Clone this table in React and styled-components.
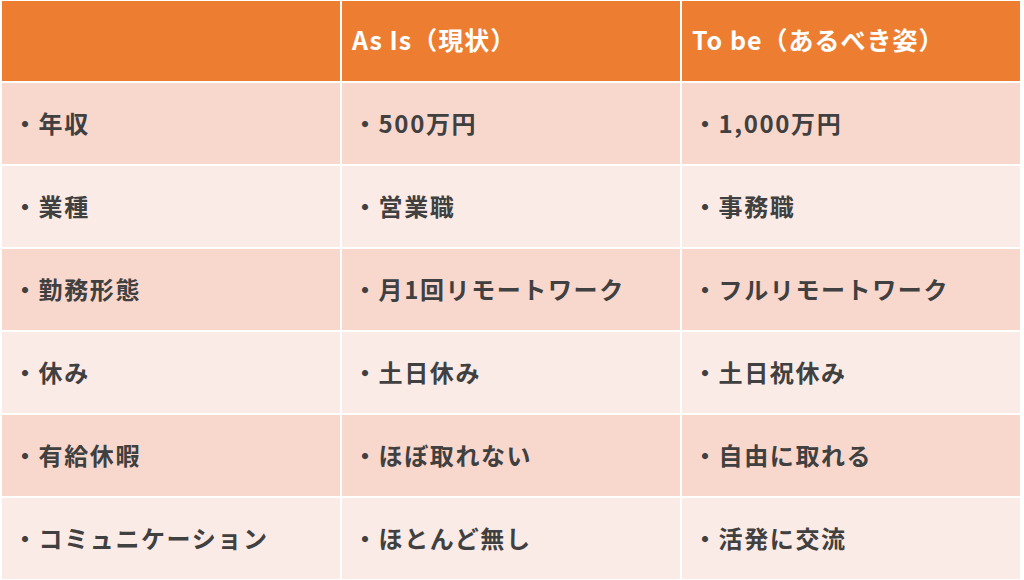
import React from 'react';
import styled, { createGlobalStyle } from 'styled-components';

const GlobalStyle = createGlobalStyle`
  html, body {
    margin: 0;
    padding: 0;
    background: #ffffff;
  }
`;

const Table = styled.div`
  display: grid;
  grid-template-columns: repeat(3, 338px);
  grid-template-rows: 80px repeat(6, 81px);
  column-gap: 2px;
  row-gap: 2px;
  padding: 1px 0 0 2px;
  background: #ffffff;
  font-family: 'Noto Sans CJK JP', 'Noto Sans', sans-serif;
`;

const HeadCell = styled.div`
  display: flex;
  align-items: center;
  padding: 0 0 5px 10px;
  background: #ed7d31;
  color: #ffffff;
  font-size: 25px;
  font-weight: 700;
  letter-spacing: 1px;
`;

const Cell = styled.div`
  display: flex;
  align-items: center;
  padding: 0 0 3px 11px;
  background: ${(p) => (p.$shade ? '#f8d7cd' : '#fbebe6')};
  color: #404040;
  font-size: 24px;
  font-weight: 700;
  letter-spacing: 1.6px;
`;

const rows = [
  ['年収', '500万円', '1,000万円'],
  ['業種', '営業職', '事務職'],
  ['勤務形態', '月1回リモートワーク', 'フルリモートワーク'],
  ['休み', '土日休み', '土日祝休み'],
  ['有給休暇', 'ほぼ取れない', '自由に取れる'],
  ['コミュニケーション', 'ほとんど無し', '活発に交流'],
];

const App = () => {
  return (
    <>
      <GlobalStyle />
      <Table>
        <HeadCell />
        <HeadCell>As Is（現状）</HeadCell>
        <HeadCell>To be（あるべき姿）</HeadCell>
        {rows.map((row, i) =>
          row.map((text, j) => (
            <Cell key={`${i}-${j}`} $shade={i % 2 === 0}>
              ・{text}
            </Cell>
          ))
        )}
      </Table>
    </>
  );
};

export default App;
